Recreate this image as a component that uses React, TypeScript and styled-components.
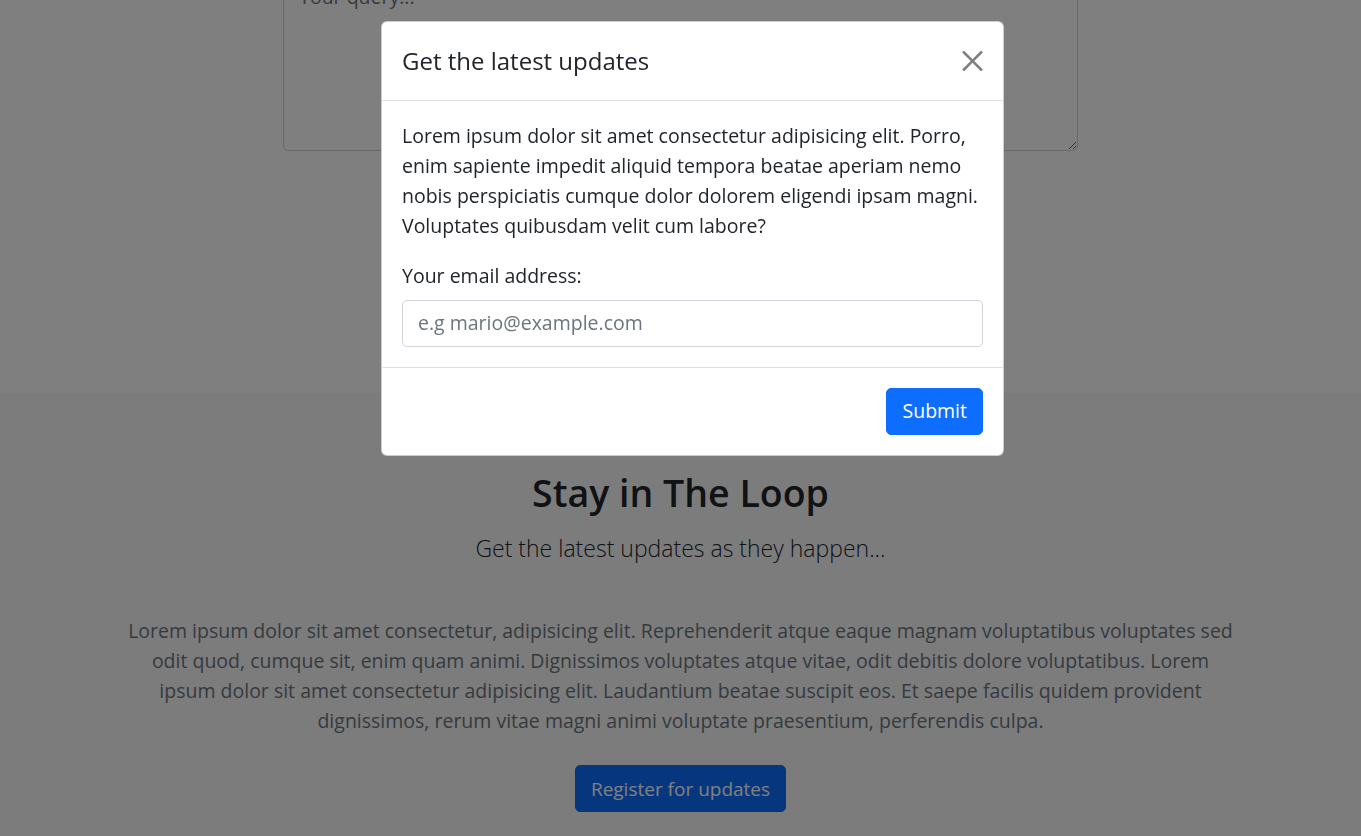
import React from "react";
import styled, { createGlobalStyle } from "styled-components";

const GlobalStyle = createGlobalStyle`
  html, body {
    margin: 0;
    padding: 0;
    background: #fff;
    overflow: hidden;
  }
  body {
    font-family: "Open Sans", "Noto Sans", sans-serif;
    font-size: 19.5px;
    line-height: 1.5;
    color: #212529;
  }
  * {
    box-sizing: border-box;
  }
`;

const Page = styled.div`
  display: flex;
  flex-direction: column;
  min-height: 836px;
`;

const QuerySection = styled.section`
  display: flex;
  justify-content: center;
  height: 393px;
  background: #fff;
`;

const QueryBox = styled.textarea`
  width: 795px;
  height: 178px;
  margin-top: -27px;
  padding: 7.5px 15px;
  font-family: inherit;
  font-size: 19.5px;
  line-height: 30px;
  color: #212529;
  border: 1px solid #ced4da;
  border-radius: 5px;
  resize: vertical;

  &::placeholder {
    color: #6c757d;
  }
`;

const LoopSection = styled.section`
  flex: 1;
  display: flex;
  flex-direction: column;
  align-items: center;
  padding: 77px 20px 60px;
  background: #f8f9fa;
  text-align: center;
`;

const LoopTitle = styled.h1`
  margin: 0;
  font-size: 37.5px;
  font-weight: 600;
  line-height: 46.8px;
  color: #212529;
`;

const Lead = styled.p`
  margin: 14px 0 0;
  font-size: 23px;
  font-weight: 300;
  line-height: 1.5;
`;

const Blurb = styled.p`
  max-width: 1110px;
  margin: 51px 0 0;
  color: #6c757d;
  line-height: 30px;
`;

const Button = styled.button<{ $size?: number }>`
  display: inline-block;
  padding: 7.5px 15px;
  font-family: inherit;
  font-size: ${(p) => p.$size ?? 19.5}px;
  line-height: 30px;
  color: #fff;
  background: #0d6efd;
  border: 1px solid #0d6efd;
  border-radius: 5px;
  cursor: pointer;
`;

const RegisterButton = styled(Button)`
  margin-top: 29px;
`;

const Backdrop = styled.div`
  position: fixed;
  inset: 0;
  background: rgba(0, 0, 0, 0.5);
`;

const ModalLayer = styled.div`
  position: fixed;
  inset: 0;
  display: flex;
  justify-content: center;
  align-items: flex-start;
  padding: 21px 0 0 24px;
`;

const ModalDialog = styled.div`
  width: 623px;
  display: flex;
  flex-direction: column;
  background: #fff;
  border: 1px solid rgba(0, 0, 0, 0.2);
  border-radius: 6px;
`;

const ModalHeader = styled.div`
  display: flex;
  align-items: center;
  padding: 20px;
  border-bottom: 1px solid #dee2e6;
`;

const ModalTitle = styled.h5`
  margin: 0;
  font-size: 24px;
  font-weight: 500;
  line-height: 37.5px;
`;

const CloseButton = styled.button`
  display: flex;
  align-items: center;
  justify-content: center;
  width: 31px;
  height: 30px;
  margin: -10px -5px -10px auto;
  padding: 5px;
  background: transparent;
  border: 0;
  opacity: 0.5;
  cursor: pointer;
`;

const ModalBody = styled.div`
  padding: 20px;
`;

const BodyText = styled.p`
  margin: 0 0 20px;
  line-height: 30px;
`;

const Label = styled.label`
  display: block;
  margin-bottom: 10px;
`;

const EmailInput = styled.input`
  display: block;
  width: 100%;
  padding: 7.5px 15px;
  font-family: inherit;
  font-size: 19.5px;
  line-height: 30px;
  color: #212529;
  border: 1px solid #ced4da;
  border-radius: 5px;

  &::placeholder {
    color: #6c757d;
  }
`;

const ModalFooter = styled.div`
  display: flex;
  justify-content: flex-end;
  padding: 15px;
  border-top: 1px solid #dee2e6;

  & > * {
    margin: 5px;
  }
`;

const CloseIcon = () => (
  <svg width="21" height="20" viewBox="0 0 16 16" fill="#000">
    <path d="M.293.293a1 1 0 0 1 1.414 0L8 6.586 14.293.293a1 1 0 1 1 1.414 1.414L9.414 8l6.293 6.293a1 1 0 0 1-1.414 1.414L8 9.414l-6.293 6.293a1 1 0 0 1-1.414-1.414L6.586 8 .293 1.707a1 1 0 0 1 0-1.414z" />
  </svg>
);

export default function App() {
  return (
    <>
      <GlobalStyle />
      <Page>
        <QuerySection>
          <QueryBox placeholder="Your query..." />
        </QuerySection>
        <LoopSection>
          <LoopTitle>Stay in The Loop</LoopTitle>
          <Lead>Get the latest updates as they happen...</Lead>
          <Blurb>
            Lorem ipsum dolor sit amet consectetur, adipisicing elit. Reprehenderit atque eaque
            magnam voluptatibus voluptates sed odit quod, cumque sit, enim quam animi. Dignissimos
            voluptates atque vitae, odit debitis dolore voluptatibus. Lorem ipsum dolor sit amet
            consectetur adipisicing elit. Laudantium beatae suscipit eos. Et saepe facilis quidem
            provident dignissimos, rerum vitae magni animi voluptate praesentium, perferendis culpa.
          </Blurb>
          <RegisterButton $size={19}>Register for updates</RegisterButton>
        </LoopSection>
      </Page>

      <Backdrop />
      <ModalLayer>
        <ModalDialog role="dialog">
          <ModalHeader>
            <ModalTitle>Get the latest updates</ModalTitle>
            <CloseButton aria-label="Close">
              <CloseIcon />
            </CloseButton>
          </ModalHeader>
          <ModalBody>
            <BodyText>
              Lorem ipsum dolor sit amet consectetur adipisicing elit. Porro, enim sapiente impedit
              aliquid tempora beatae aperiam nemo nobis perspiciatis cumque dolor dolorem eligendi
              ipsam magni. Voluptates quibusdam velit cum labore?
            </BodyText>
            <Label htmlFor="email">Your email address:</Label>
            <EmailInput id="email" type="email" placeholder="e.g mario@example.com" />
          </ModalBody>
          <ModalFooter>
            <Button>Submit</Button>
          </ModalFooter>
        </ModalDialog>
      </ModalLayer>
    </>
  );
}
